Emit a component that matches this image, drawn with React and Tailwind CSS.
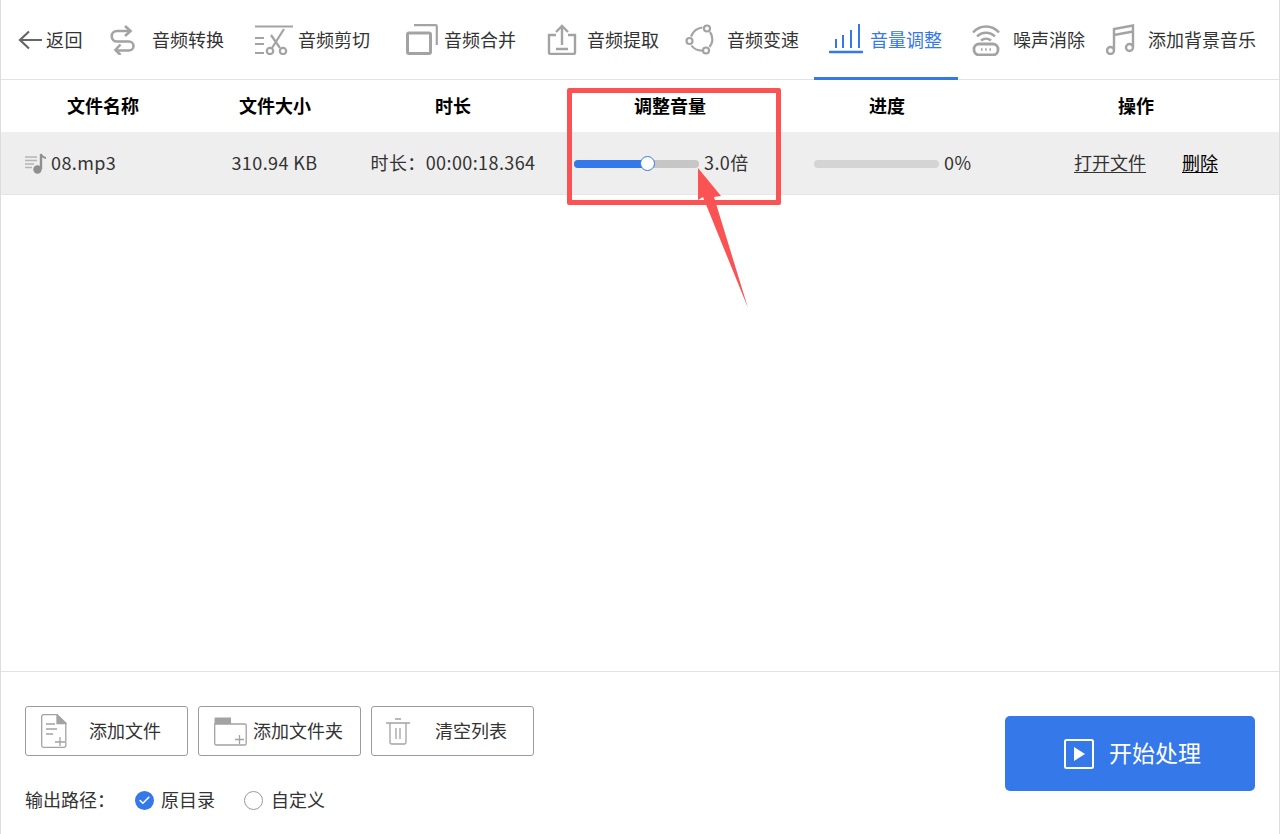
import { Check } from 'lucide-react'

const FONT = 'font-["Noto_Sans_CJK_SC","Liberation_Sans",sans-serif]'
const COLS = 'grid grid-cols-[204px_139px_218px_216px_218px_283px]'

// ─── Toolbar icons ───
const ConvertIcon = () => (
  <svg width="26" height="30" viewBox="0 0 26 30" fill="none" stroke="#a3a3a3" strokeWidth="2.6">
    <path d="M15 1l5.500 5-5.500 5" />
    <path d="M20 6H7a5 5 0 0 0 0 10.500h12a4.500 4.500 0 0 1 0 9H6" />
    <path d="M10.500 19.500L5.500 25l5 5" />
  </svg>
)
const CutIcon = () => (
  <svg width="38" height="30" viewBox="0 0 38 30" fill="none" stroke="#a3a3a3" strokeWidth="2.2">
    <path d="M0 1.500h38M0 13h9M0 19h9M0 28h9" />
    <path d="M29 4L17 23M16 10l9 13" />
    <circle cx="15" cy="26" r="3.200" />
    <circle cx="28" cy="26" r="3.200" />
  </svg>
)
const MergeIcon = () => (
  <svg width="32" height="31" viewBox="0 0 32 31" fill="none" stroke="#a3a3a3">
    <rect x="1.500" y="9" width="23" height="20.500" rx="1.500" strokeWidth="3" />
    <path d="M8 1.200h21.500a1.300 1.300 0 0 1 1.300 1.300V21" strokeWidth="2.200" />
  </svg>
)
const ExtractIcon = () => (
  <svg width="30" height="31" viewBox="0 0 30 31" fill="none" stroke="#a3a3a3" strokeWidth="2.400">
    <path d="M9 11H2v17.500a1.500 1.500 0 0 0 1.500 1.500h23a1.500 1.500 0 0 0 1.500-1.500V11h-7" />
    <path d="M15 21V2M9 8l6-6 6 6M9 25h12" />
  </svg>
)
const SpeedIcon = () => (
  <svg width="32" height="31" viewBox="0 0 32 31" fill="none" stroke="#a3a3a3" strokeWidth="2.200">
    <circle cx="22" cy="4.500" r="3" />
    <circle cx="4.500" cy="17" r="3" />
    <circle cx="21" cy="26.500" r="3" />
    <path d="M17.500 3.500C12 4 8 7.500 6 12.500M6.500 21.500c2 3 5.500 5 10.500 5.200M25 8c3.500 5 3 11-.5 15" />
  </svg>
)
const VolumeIcon = () => (
  <svg width="34" height="30" viewBox="0 0 34 30" fill="none" stroke="#3478ea" strokeWidth="2">
    <path d="M7 15v9M14 11v13M22 6v18M30 0v24" />
    <path d="M1 28h32" strokeWidth="2.600" strokeLinecap="round" />
  </svg>
)
const NoiseIcon = () => (
  <svg width="28" height="32" viewBox="0 0 28 32" fill="none" stroke="#a3a3a3" strokeWidth="2.400">
    <path d="M1 8.500C8 .500 20 .500 27 8.500M5 12.500c5-5 13-5 18 0M9 16.500c3-2.500 7-2.500 10 0" />
    <rect x="2" y="20" width="24" height="11" rx="5" strokeWidth="2.800" />
    <path d="M9 25.500h1.500M13.200 25.500h1.500M17.500 25.500h1.500" />
  </svg>
)
const MusicIcon = () => (
  <svg width="29" height="31" viewBox="0 0 29 31" fill="none" stroke="#a3a3a3" strokeWidth="2.400">
    <path d="M8 26V5l19-3.500V23" />
    <path d="M8 11l19-3.500" />
    <circle cx="4.500" cy="26.500" r="3.500" />
    <circle cx="23.500" cy="23.500" r="3.500" />
  </svg>
)

const tabs = [
  { label: '音频转换', Icon: ConvertIcon, cls: 'ml-[27px] w-[42px]' },
  { label: '音频剪切', Icon: CutIcon, cls: 'ml-[31px] w-[43px]' },
  { label: '音频合并', Icon: MergeIcon, cls: 'ml-[36px] w-[38px]' },
  { label: '音频提取', Icon: ExtractIcon, cls: 'ml-[31px] w-[40px]' },
  { label: '音频变速', Icon: SpeedIcon, cls: 'ml-[26px] w-[42px]' },
]
const tabsRight = [
  { label: '噪声消除', Icon: NoiseIcon, cls: 'ml-[14px] w-[41px]' },
  { label: '添加背景音乐', Icon: MusicIcon, cls: 'ml-[21px] w-[42px]' },
]

function Tab({ label, Icon, cls }) {
  return (
    <div className="flex items-center whitespace-nowrap">
      <div className={`${cls} shrink-0 flex items-center`}><Icon /></div>
      <span className="mb-[2px]">{label}</span>
    </div>
  )
}

// ─── Bottom buttons ───
const FileIcon = () => (
  <svg width="26" height="34" viewBox="0 0 26 34" fill="none" stroke="#a3a3a3" strokeWidth="1.300">
    <path d="M16 .7H2.500A1.800 1.800 0 0 0 .7 2.500v29a1.800 1.800 0 0 0 1.800 1.800H23a1.800 1.800 0 0 0 1.800-1.800V9z" />
    <path d="M16 1l8.500 8.500H16z" fill="#a3a3a3" />
    <path d="M5 10h9M5 15h11M5 20h7M14 28h10M19 23v9" />
  </svg>
)
const FolderIcon = () => (
  <svg width="33" height="29" viewBox="0 0 33 29" fill="none" stroke="#a3a3a3" strokeWidth="1.300">
    <path d="M.7 7h30a1.500 1.500 0 0 1 1.500 1.500v18a1.500 1.500 0 0 1-1.500 1.500H2.200A1.500 1.500 0 0 1 .7 26.500z" />
    <path d="M.5 1.500A1 1 0 0 1 1.500.5h15.500v6.500H.5z" fill="#a3a3a3" stroke="none" />
    <path d="M21 22.500h9M25.500 18v9" />
  </svg>
)
const TrashIcon = () => (
  <svg width="24" height="27" viewBox="0 0 24 27" fill="none" stroke="#a3a3a3" strokeWidth="1.300">
    <path d="M0 5h24M9 1h6M4 5v19.500A1.500 1.500 0 0 0 5.500 26h13a1.500 1.500 0 0 0 1.500-1.500V5M10 10v11M14 10v11" />
  </svg>
)

function ToolButton({ icon, label, iconCls }) {
  return (
    <button className="w-[163px] h-[50px] border border-[#9b9b9b] rounded-[3px] flex items-center bg-white text-[#333] text-[18px] whitespace-nowrap">
      <div className={`${iconCls} shrink-0 flex items-center`}>{icon}</div>
      <span className="mb-[2px]">{label}</span>
    </button>
  )
}

export default function App() {
  return (
    <div className={`${FONT} relative w-[1280px] h-[834px] overflow-hidden bg-white border-x border-[#dcdcdc] flex flex-col text-[#333] text-[18px] leading-none`}>
      {/* Toolbar */}
      <header className="h-[80px] shrink-0 border-b border-[#e3e3e3] flex items-stretch">
        <div className="flex items-center whitespace-nowrap pl-[17px]">
          <svg width="24" height="20" viewBox="0 0 24 20" fill="none" stroke="#666" strokeWidth="2.200">
            <path d="M11 1.500L2 10l9 8.500M2.500 10H24" />
          </svg>
          <span className="ml-[4px] mb-[2px] tracking-[0.5px]">返回</span>
        </div>
        {tabs.map(t => <Tab key={t.label} {...t} />)}
        <div className="ml-[15px] w-[144px] shrink-0 pl-[15px] flex items-center border-b-[3px] border-[#3478ea] -mb-px text-[#3478ea] whitespace-nowrap">
          <div className="w-[41px] shrink-0 flex items-center"><VolumeIcon /></div>
          <span>音量调整</span>
        </div>
        {tabsRight.map(t => <Tab key={t.label} {...t} />)}
      </header>

      {/* Table */}
      <div className={`${COLS} h-[52px] shrink-0 items-center text-center font-bold text-black pb-[2px]`}>
        <div>文件名称</div>
        <div className="pl-[1px]">文件大小</div>
        <div>时长</div>
        <div>调整音量</div>
        <div>进度</div>
        <div className="pr-[3px]">操作</div>
      </div>
      <div className={`${COLS} h-[63px] shrink-0 items-center bg-[#eeeeee] border-b border-[#e6e6e6] tracking-[0.4px]`}>
        <div className="flex items-center pl-[24px]">
          <svg width="22" height="22" viewBox="0 0 22 22" fill="none" className="mr-[4px]">
            <path d="M0 5h12M0 8.500h12M0 12h9M0 15.500h7" stroke="#b5b5b5" strokeWidth="1.500" />
            <path d="M16 2v15" stroke="#8f8f8f" strokeWidth="2.400" />
            <path d="M16 1c1 2.500 3 3.500 5 4v2c-2-.5-4-1.500-5-3z" fill="#8f8f8f" />
            <circle cx="12.500" cy="17.500" r="4.200" fill="#8f8f8f" />
          </svg>
          <span className="mb-[2px]">08.mp3</span>
        </div>
        <div className="text-center mb-[2px]">310.94 KB</div>
        <div className="text-center mb-[2px]">时长：00:00:18.364</div>
        <div className="flex items-center pl-[12px]">
          <div className="relative w-[125px] h-[8px] mt-[2px] rounded-full bg-[#c6c6c6]">
            <div className="h-full w-[73px] rounded-full bg-[#3478ea]" />
            <div className="absolute left-[66px] top-[-4px] w-[15px] h-[15px] rounded-full bg-white border-[1.5px] border-[#3478ea]" />
          </div>
          <span className="ml-[5px] mb-[2px] whitespace-nowrap">3.0倍</span>
        </div>
        <div className="flex items-center pl-[36px]">
          <div className="w-[125px] h-[8px] mt-[2px] rounded-full bg-[#d4d4d4]" />
          <span className="ml-[5px] mb-[2px]">0%</span>
        </div>
        <div className="flex items-center pl-[78px] whitespace-nowrap tracking-normal">
          <a className="underline underline-offset-2 mb-[2px]">打开文件</a>
          <a className="underline underline-offset-2 ml-[36px] mb-[2px] text-black">删除</a>
        </div>
      </div>

      <div className="flex-1" />

      {/* Footer */}
      <footer className="h-[163px] shrink-0 border-t border-[#e3e3e3] flex justify-between pl-[24px] pr-[24px]">
        <div className="pt-[34px]">
          <div className="flex gap-[10px]">
            <ToolButton icon={<FileIcon />} label="添加文件" iconCls="ml-[15px] w-[48px]" />
            <ToolButton icon={<FolderIcon />} label="添加文件夹" iconCls="ml-[15px] w-[39px]" />
            <ToolButton icon={<TrashIcon />} label="清空列表" iconCls="ml-[14px] w-[49px]" />
          </div>
          <div className="flex items-center mt-[34px] h-[20px] whitespace-nowrap">
            <span className="w-[110px] mb-[2px]">输出路径：</span>
            <span className="w-[19px] h-[19px] rounded-full bg-[#3478ea] flex items-center justify-center">
              <Check size={13} strokeWidth={3} color="#fff" />
            </span>
            <span className="ml-[7px] mb-[2px]">原目录</span>
            <span className="ml-[29px] w-[19px] h-[19px] rounded-full border border-[#9b9b9b] bg-white" />
            <span className="ml-[8px] mb-[2px]">自定义</span>
          </div>
        </div>
        <button className="mt-[44px] w-[250px] h-[75px] rounded-[5px] bg-[#3478ea] text-white text-[23px] flex items-center pl-[59px] whitespace-nowrap">
          <svg width="30" height="30" viewBox="0 0 30 30" fill="none" className="mr-[15px]">
            <rect x="1" y="1" width="28" height="28" rx="1.500" stroke="#fff" strokeWidth="2" />
            <path d="M10 8l11 7-11 7z" fill="#fff" />
          </svg>
          <span className="mb-[2px]">开始处理</span>
        </button>
      </footer>

      {/* Red annotation over the volume column */}
      <div className="absolute left-[566px] top-[88px] w-[214px] h-[117px] border-[5px] border-[#fb5353] rounded-[2px]" />
      <svg className="absolute left-[689px] top-[160px]" width="70" height="155" viewBox="0 0 70 155">
        <path d="M8 8L31 36 24 37 58 148 13 37 8 40z" fill="#fb5353" />
      </svg>
    </div>
  )
}
